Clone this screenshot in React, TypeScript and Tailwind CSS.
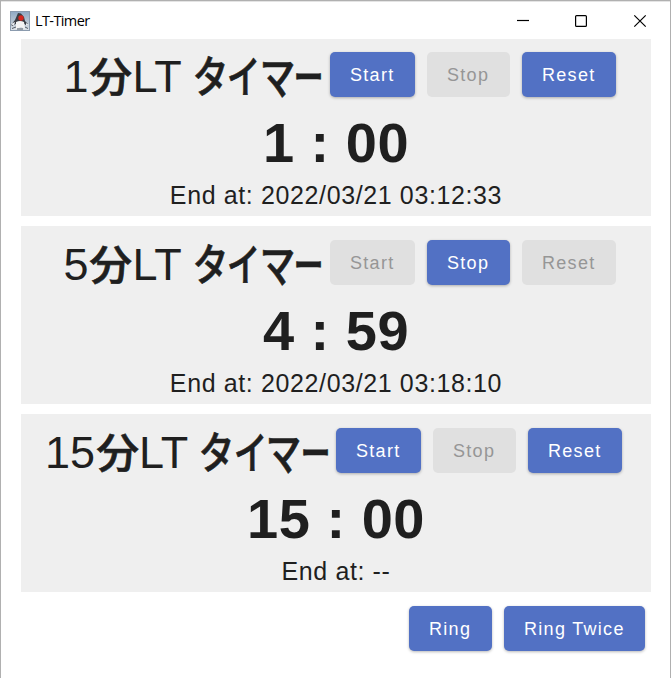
import React from "react";

type Glyph = { ch: string; box: string; shape: string };

const KANJI: Glyph = { ch: "分", box: "w-[44px]", shape: "-translate-y-[2px] scale-x-[0.95] scale-y-[0.92]" };

const KANA: Glyph[] = [
  { ch: "タ", box: "w-[34px]", shape: "-translate-y-[2.5px] scale-x-[0.8] scale-y-[0.98]" },
  { ch: "イ", box: "w-[33px]", shape: "-translate-y-[2.5px] scale-x-[0.75] scale-y-[0.98]" },
  { ch: "マ", box: "w-[34px]", shape: "-translate-y-[2.5px] scale-x-[0.79] scale-y-[1.02]" },
  { ch: "ー", box: "w-[29px]", shape: "-translate-y-[2.5px] scale-x-[0.67]" },
];

function Wide({ g }: { g: Glyph }) {
  return (
    <span className={`flex shrink-0 justify-center font-['Noto_Sans_CJK_JP',sans-serif] font-medium [-webkit-text-stroke:0.7px_#1f1f1f] ${g.box}`}>
      <span className={`block shrink-0 ${g.shape}`}>{g.ch}</span>
    </span>
  );
}

function Button({ label, width, disabled = false }: { label: string; width: string; disabled?: boolean }) {
  return (
    <button
      disabled={disabled}
      className={`h-[45px] shrink-0 rounded-[5px] pt-px pl-[20px] text-left text-[18px] leading-[44px] tracking-[1.3px] whitespace-nowrap ${width} ${
        disabled ? "bg-[#e0e0e0] text-[#969696]" : "bg-[#5271c4] text-white shadow-[0_1px_3px_rgba(0,0,0,0.28)]"
      }`}
    >
      {label}
    </button>
  );
}

type TimerProps = { minutes: string; time: string; end: string; running?: boolean; card: string; title: string };

function Timer({ minutes, time, end, running = false, card, title }: TimerProps) {
  return (
    <section className={`flex flex-col bg-[#efefef] ${card}`}>
      <div className="flex h-[45px] shrink-0">
        <h1 className={`flex shrink-0 pt-[2px] text-[45px] leading-[45px] whitespace-pre ${title}`}>
          <span>{minutes}</span>
          <Wide g={KANJI} />
          <span>{"LT "}</span>
          {KANA.map((g) => (
            <Wide key={g.ch} g={g} />
          ))}
        </h1>
        <div className="flex gap-3">
          <Button label="Start" width="w-[85px]" disabled={running} />
          <Button label="Stop" width="w-[83px]" disabled={!running} />
          <Button label="Reset" width="w-[94px]" disabled={running} />
        </div>
      </div>
      <p className="mt-4 h-[59px] shrink-0 text-center text-[56px] leading-[59px] font-bold tracking-[0.5px] whitespace-pre">{time}</p>
      <p className="h-[44px] text-center text-[25px] leading-[46px] tracking-[0.62px] whitespace-pre">{end}</p>
    </section>
  );
}

function AppIcon() {
  return (
    <svg width="20" height="20" viewBox="0 0 20 20">
      <defs>
        <linearGradient id="tile" x1="0" y1="0" x2="0" y2="1">
          <stop offset="0" stopColor="#8fa9c4" />
          <stop offset="0.5" stopColor="#b4c2d0" />
          <stop offset="1" stopColor="#dde3ea" />
        </linearGradient>
      </defs>
      <rect x="0.5" y="0.5" width="19" height="19" fill="url(#tile)" stroke="#8b9bae" />
      <path d="M8 2L11 2.5L14 6L15 10L18 13L17 15L13 12L7 12L3 15L1 14L5 9Z" fill="#3a3d44" />
      <path d="M6 11Q10 9 14 11L15 18L11 16L6 18Z" fill="#f4f4f4" />
      <path d="M1 13L5 11L4 15ZM16 12L19 14L16 15Z" fill="#e9eef3" />
      <circle cx="11" cy="7" r="2.7" fill="#d5271f" />
      <path d="M2 17.5L6 16M15 16L18 17.5M7 18H13" stroke="#555c65" />
    </svg>
  );
}

export default function App() {
  return (
    <div className="flex h-[678px] w-[671px] flex-col overflow-hidden border-x border-t border-[#b0b0b0] bg-white font-['Liberation_Sans',Arial,sans-serif] text-[#1f1f1f]">
      <header className="flex h-[38px] shrink-0 items-center border-t border-[#e4e4e4] pl-[9px] text-black">
        <AppIcon />
        <span className="ml-[5px] font-['Open_Sans',sans-serif] text-[14.5px] tracking-[-0.6px]">LT-Timer</span>
        <svg className="ml-auto" width="154" height="36" viewBox="516 2 154 36" fill="none" stroke="black" strokeWidth="1.2">
          <path d="M517 19.5H529" />
          <rect x="575.6" y="14.6" width="10.8" height="10.8" rx="1" />
          <path d="M634.3 14.3L645.7 25.7M645.7 14.3L634.3 25.7" />
        </svg>
      </header>
      <main className="flex w-[650px] flex-col gap-[10px] pl-5">
        <Timer minutes="1" time="1 : 00" end="End at: 2022/03/21 03:12:33" card="h-[177px] pt-[13px]" title="ml-[42.5px] w-[266.5px]" />
        <Timer minutes="5" time="4 : 59" end="End at: 2022/03/21 03:18:10" running card="h-[178px] pt-[14px]" title="ml-[42.5px] w-[266.5px]" />
        <Timer minutes="15" time="15 : 00" end="End at: --" card="h-[178px] pt-[14px]" title="ml-[24px] w-[291px]" />
      </main>
      <footer className="mt-[14px] flex justify-end gap-3 pr-[25px]">
        <Button label="Ring" width="w-[83px]" />
        <Button label="Ring Twice" width="w-[141px]" />
      </footer>
    </div>
  );
}
